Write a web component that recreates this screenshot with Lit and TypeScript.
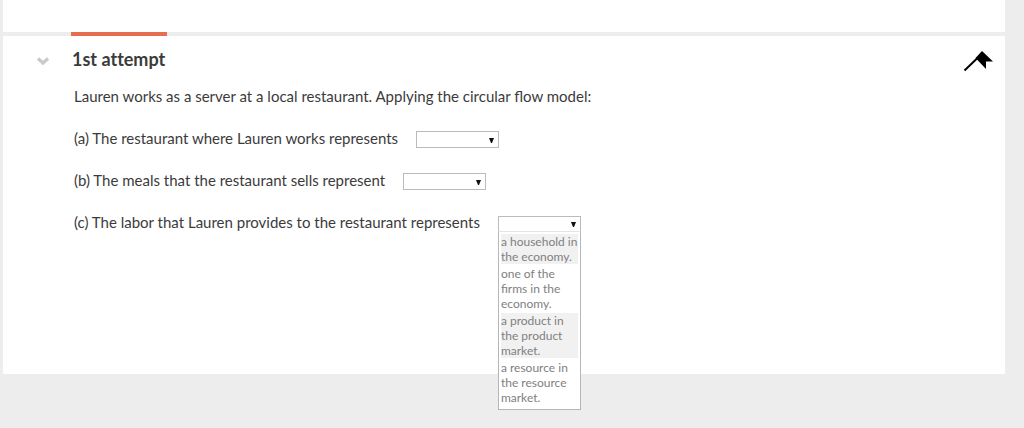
import { LitElement, html, css, nothing } from "lit";
import { customElement, property } from "lit/decorators.js";
import { classMap } from "lit/directives/class-map.js";

const ANSWERS = [
  "a household in the economy.",
  "one of the firms in the economy.",
  "a product in the product market.",
  "a resource in the resource market.",
];

@customElement("answer-select")
export class AnswerSelect extends LitElement {
  @property() label = "";
  @property({ type: Boolean }) open = false;

  static styles = css`
    :host {
      display: block;
    }
    .question {
      display: flex;
      align-items: flex-end;
      gap: 18px;
      height: 20px;
    }
    label {
      line-height: 20px;
    }
    .field {
      position: relative;
      display: flex;
      width: 83px;
    }
    select {
      appearance: none;
      box-sizing: border-box;
      width: 100%;
      height: 17px;
      margin: 0;
      padding: 0 16px 0 2px;
      border: 1px solid #b9bcbf;
      border-radius: 0;
      background: #fff;
      color: #888;
      font: 12px/15px Lato, sans-serif;
    }
    .open select {
      height: 16px;
      border-bottom-color: #e4e4e4;
    }
    .arrow {
      position: absolute;
      right: 5px;
      top: 7px;
      width: 5px;
      height: 5px;
      pointer-events: none;
    }
    .open .arrow {
      top: 6px;
    }
    .menu {
      position: absolute;
      top: 100%;
      left: 0;
      right: 0;
      display: flex;
      flex-direction: column;
      gap: 2px;
      padding: 2px 2px 4px;
      border: 1px solid #b4b7ba;
      border-top: 0;
      background: #fff;
    }
    .option {
      padding: 0;
      border: 0;
      background: #fff;
      color: #808080;
      font: 12px/15px Lato, sans-serif;
      text-align: left;
    }
    .option:nth-child(odd) {
      background: #f1f1f1;
    }
  `;

  private toggle(event: Event) {
    event.preventDefault();
    this.open = !this.open;
  }

  private choose(index: number) {
    this.renderRoot.querySelector("select")!.selectedIndex = index + 1;
    this.open = false;
  }

  render() {
    return html`
      <div class="question">
        <label for="answer">${this.label}</label>
        <div class=${classMap({ field: true, open: this.open })}>
          <select id="answer" @mousedown=${this.toggle}>
            <option></option>
            ${ANSWERS.map((text) => html`<option>${text}</option>`)}
          </select>
          <svg class="arrow" viewBox="0 0 5 5" aria-hidden="true">
            <path d="M0 0H5L3 5H2Z" fill="#111" />
          </svg>
          ${this.open
            ? html`<div class="menu" role="listbox" aria-label=${this.label}>
                ${ANSWERS.map(
                  (text, i) =>
                    html`<button class="option" role="option" @click=${() => this.choose(i)}>${text}</button>`
                )}
              </div>`
            : nothing}
        </div>
      </div>
    `;
  }
}

@customElement("app-root")
export class AppRoot extends LitElement {
  static styles = css`
    :host {
      display: block;
      box-sizing: border-box;
      min-height: 100vh;
      padding: 0 19px 0 3px;
      background: #ededed;
      color: #3b3b3b;
      font: 15px/20px Lato, sans-serif;
    }
    .previous {
      height: 32px;
      background: #fff;
    }
    .divider {
      height: 4px;
      padding-left: 68px;
    }
    .marker {
      width: 96px;
      height: 4px;
      background: #e46e4f;
    }
    .attempt {
      padding: 11px 12px 142px 33px;
      background: #fff;
    }
    header {
      display: flex;
      align-items: center;
      height: 24px;
    }
    .toggle,
    .pin {
      display: flex;
      padding: 4px 0 0;
      border: 0;
      background: none;
    }
    h2 {
      flex: 1;
      margin: 0 0 0 22px;
      font-size: 18px;
      line-height: 24px;
      font-weight: 700;
      font-variant-ligatures: none;
    }
    .body {
      display: flex;
      flex-direction: column;
      gap: 22px;
      padding: 15px 0 0 38px;
    }
    p {
      margin: 0;
    }
  `;

  render() {
    return html`
      <div class="previous"></div>
      <div class="divider"><div class="marker"></div></div>
      <section class="attempt">
        <header>
          <button class="toggle" aria-label="Collapse attempt">
            <svg width="14" height="10" viewBox="0 0 14 10">
              <path d="M2 2.500L7 7L12 2.500" fill="none" stroke="#c9c9c9" stroke-width="3.200" />
            </svg>
          </button>
          <h2>1st attempt</h2>
          <button class="pin" aria-label="Pin question">
            <svg width="30" height="22" viewBox="0 0 30 22">
              <path d="M19 1L30 11.500H23V19L12.500 8Z" fill="#000" />
              <path d="M14.500 8L1.500 20.500" stroke="#000" stroke-width="2" />
            </svg>
          </button>
        </header>
        <div class="body">
          <p>Lauren works as a server at a local restaurant. Applying the circular flow model:</p>
          <answer-select label="(a) The restaurant where Lauren works represents"></answer-select>
          <answer-select label="(b) The meals that the restaurant sells represent"></answer-select>
          <answer-select label="(c) The labor that Lauren provides to the restaurant represents" open></answer-select>
        </div>
      </section>
    `;
  }
}
